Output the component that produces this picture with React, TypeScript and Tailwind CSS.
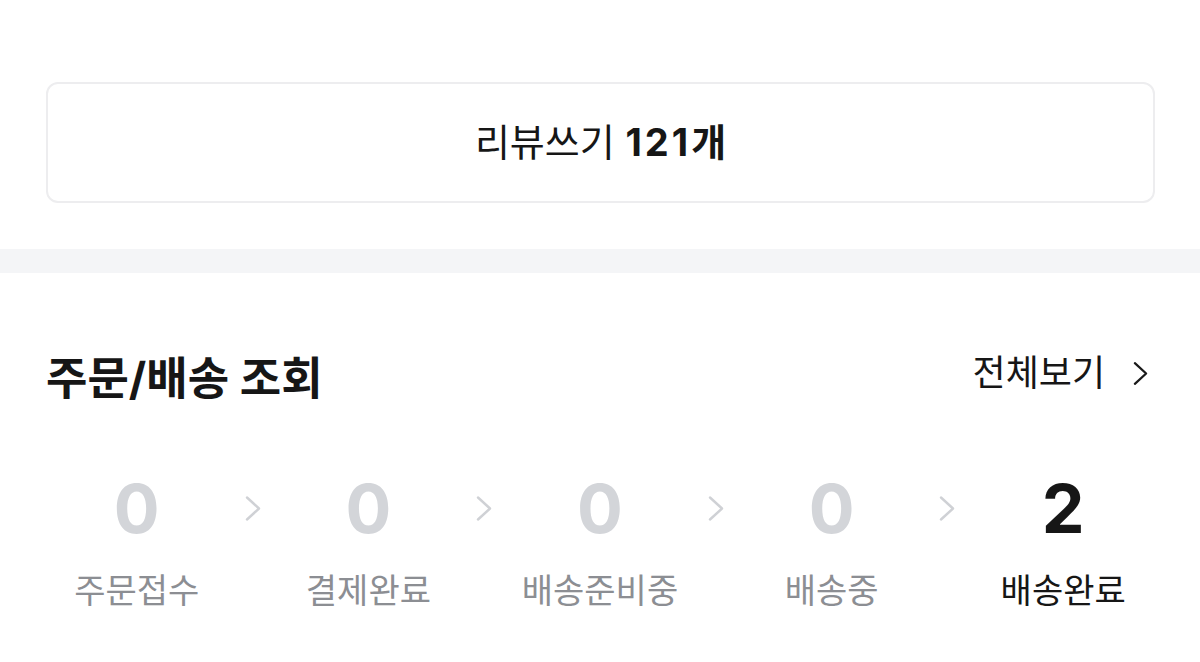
import React from "react";

interface Step {
  label: string;
  count: number;
}

const steps: Step[] = [
  { label: "주문접수", count: 0 },
  { label: "결제완료", count: 0 },
  { label: "배송준비중", count: 0 },
  { label: "배송중", count: 0 },
  { label: "배송완료", count: 2 },
];

const Chevron = ({ className }: { className: string }) => (
  <svg viewBox="0 0 16 26" fill="none" className={className}>
    <path d="M2 2 L14 13 L2 24" stroke="currentColor" strokeWidth="2.4" strokeLinecap="round" strokeLinejoin="round" />
  </svg>
);

const App: React.FC = () => {
  return (
    <div className="min-h-[662px] bg-white font-['Inter','Noto_Sans_CJK_KR',sans-serif] text-[#161616]">
      {/* 리뷰쓰기 */}
      <div className="pt-[82px] pl-[46px] pr-[45px]">
        <button className="flex h-[121px] w-full items-center justify-center rounded-[12px] border-2 border-[#ededef] bg-white text-[38px] leading-none">
          <span className="pb-[1px]">
            리뷰쓰기{" "}
            <span className="font-bold">
              <span className="tracking-[3px]">121</span>개
            </span>
          </span>
        </button>
      </div>

      <div className="mt-[46px] h-6 bg-[#f4f5f7]" />

      {/* 주문/배송 조회 */}
      <div className="mt-[80px] flex items-center justify-between pl-[46px] pr-[52px]">
        <h2 className="text-[45px] font-bold leading-[52px]">주문/배송 조회</h2>
        <a className="mb-3 flex items-center gap-[28px] text-[36px] leading-none">
          전체보기
          <Chevron className="h-[25px] w-[15px] text-[#1a1a1a]" />
        </a>
      </div>

      <div className="mt-[69px] flex items-start px-[33px]">
        {steps.map((step, i) => {
          const done = i === steps.length - 1;
          return (
            <React.Fragment key={step.label}>
              {i > 0 && (
                <div className="flex h-[68px] w-6 shrink-0 items-center justify-center">
                  <Chevron className="h-[27px] w-[16px] text-[#cfd1d5]" />
                </div>
              )}
              <div className="flex flex-1 flex-col items-center">
                <span
                  className={
                    done
                      ? "text-[68px] font-bold leading-[68px] text-[#161616]"
                      : "text-[68px] font-bold leading-[68px] text-[#d3d5d9]"
                  }
                >
                  {step.count}
                </span>
                <span
                  className={
                    done
                      ? "mt-[29px] text-[34px] leading-[40px] text-[#161616]"
                      : "mt-[29px] text-[34px] leading-[40px] text-[#8c8e93]"
                  }
                >
                  {step.label}
                </span>
              </div>
            </React.Fragment>
          );
        })}
      </div>
    </div>
  );
};

export default App;
